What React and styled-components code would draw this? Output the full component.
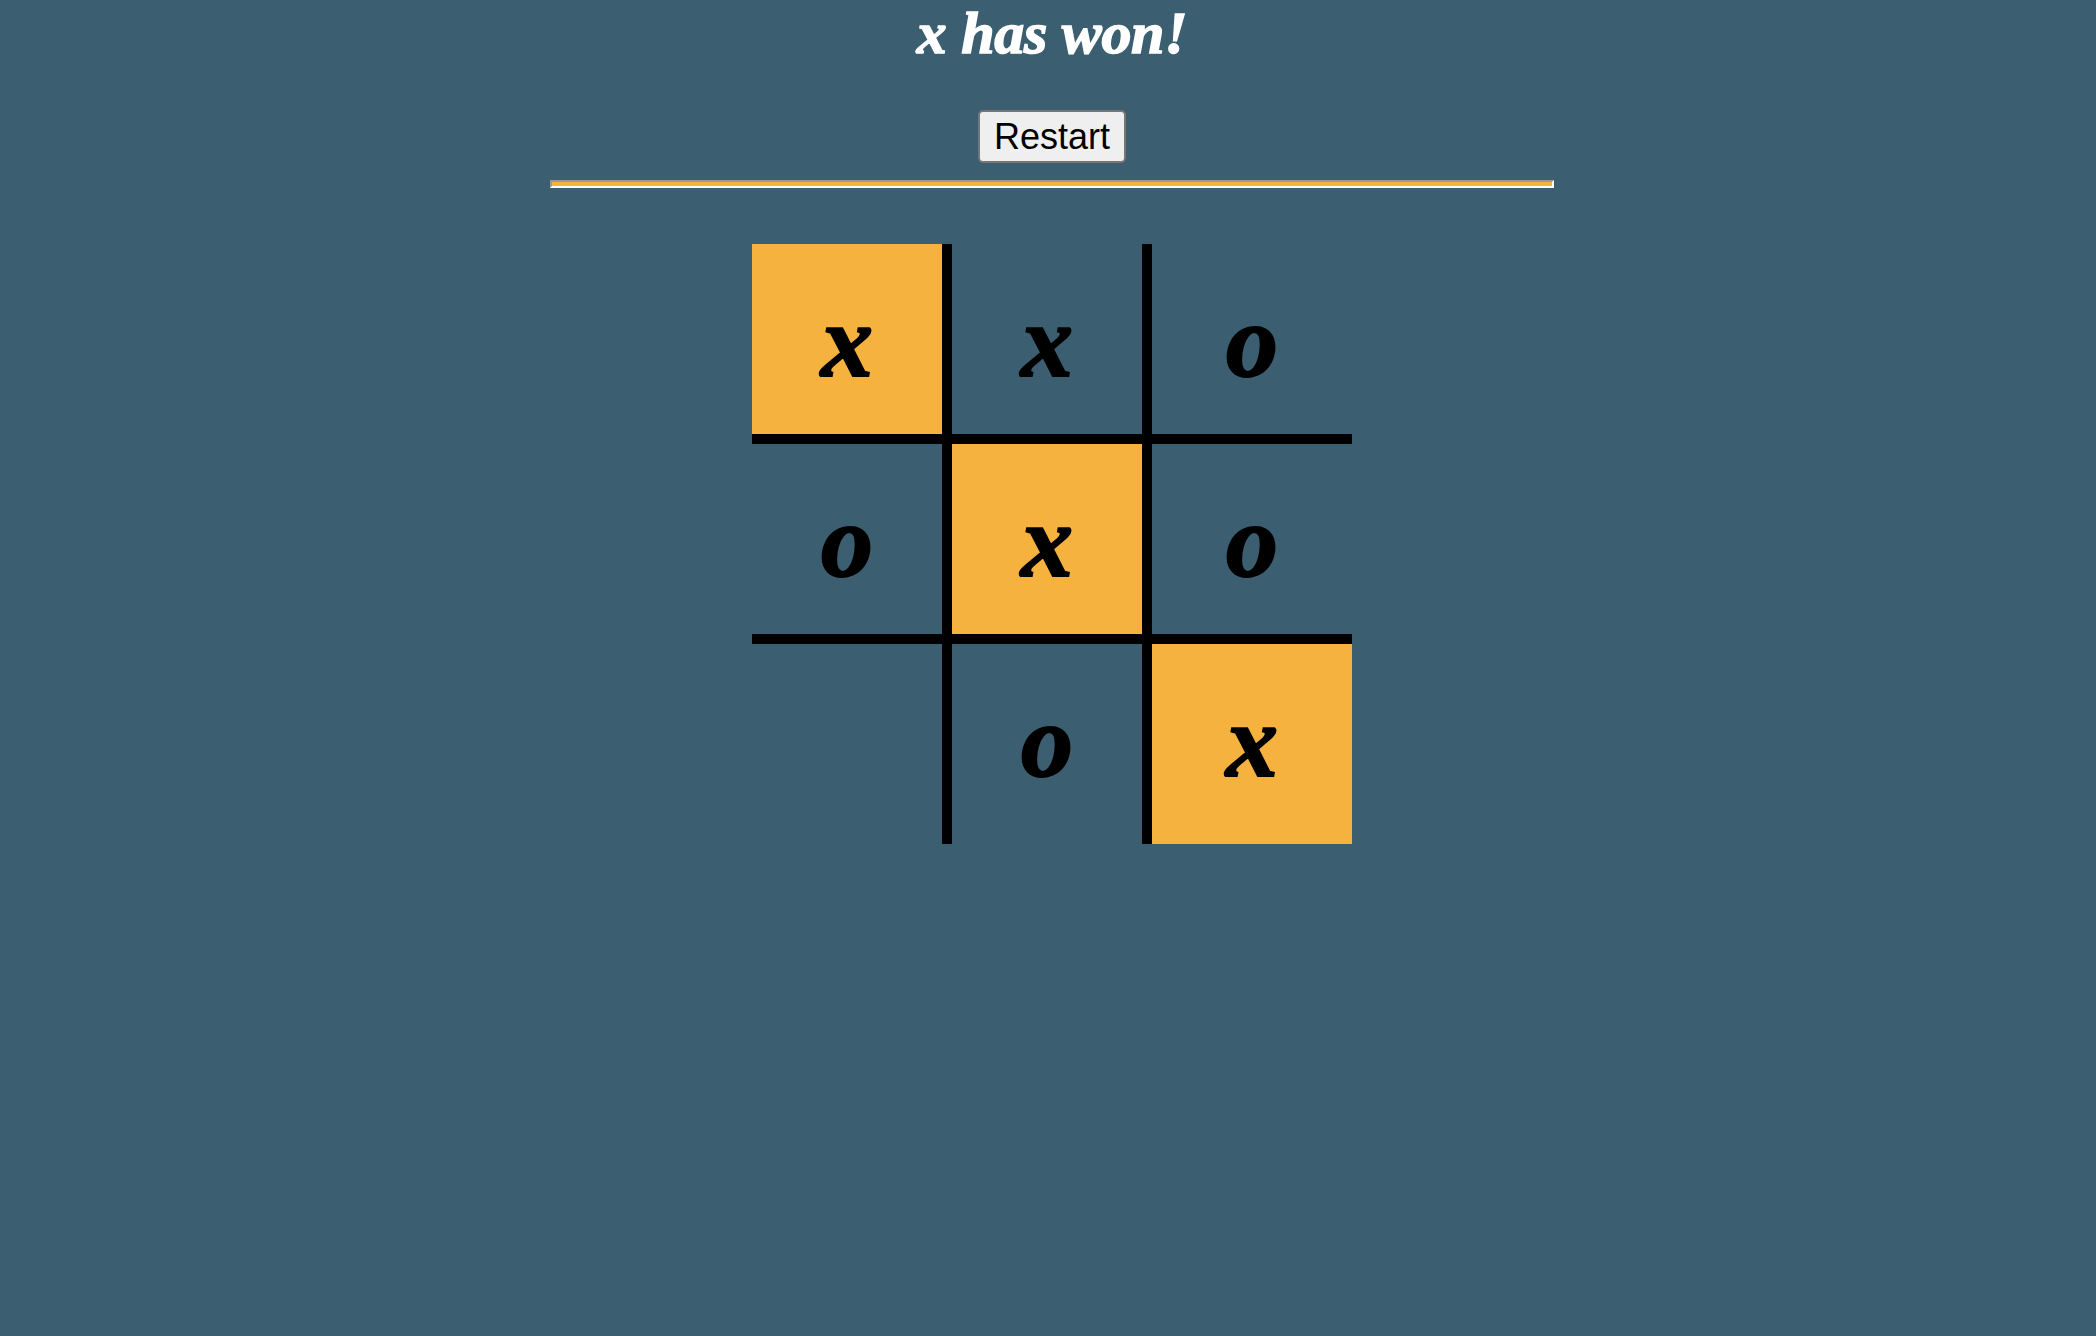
import React from "react";
import styled, { createGlobalStyle } from "styled-components";

const GlobalStyle = createGlobalStyle`
  html, body {
    margin: 0;
    background: #3b5e70;
  }
  body {
    min-height: 1336px;
    padding-left: 8px;
    overflow: hidden;
  }
`

const Page = styled.div`
  display: flex;
  flex-direction: column;
  align-items: center;
`

const Title = styled.h1`
  margin: 0 0 44px;
  font-family: "Liberation Serif", serif;
  font-style: italic;
  font-weight: 700;
  font-size: 60px;
  line-height: 66px;
  letter-spacing: -0.3px;
  color: #fff;
  -webkit-text-stroke: 1.5px #fff;
`

const RestartButton = styled.button`
  box-sizing: border-box;
  width: 148px;
  height: 53px;
  padding: 0;
  font-family: "Liberation Sans", Arial, sans-serif;
  font-size: 36px;
  color: #000;
  background: #efefef;
  border: 2px solid #767676;
  border-radius: 5px;
`

const Rule = styled.hr`
  box-sizing: border-box;
  width: 1004px;
  height: 8px;
  margin: 17px 0 56px;
  background: #f5b23e;
  border-style: solid;
  border-width: 2px;
  border-color: #9a9a9a #fff #fff #9a9a9a;
`

const Board = styled.div`
  display: grid;
  grid-template-columns: repeat(3, 200px);
  grid-template-rows: repeat(3, 200px);
`

const Cell = styled.div`
  box-sizing: border-box;
  text-align: center;
  font-family: "Liberation Serif", serif;
  font-style: italic;
  font-weight: 700;
  font-size: 104px;
  line-height: 193px;
  color: #000;
  -webkit-text-stroke: 2px #000;
  background: ${(p) => (p.$won ? "#f5b23e" : "transparent")};
  border-right: ${(p) => (p.$col < 2 ? "10px solid #000" : "none")};
  border-bottom: ${(p) => (p.$row < 2 ? "10px solid #000" : "none")};
`

const squares = ["x", "x", "o", "o", "x", "o", "", "o", "x"]
const winning = [0, 4, 8]

const App = () => {
  return (
    <Page>
      <GlobalStyle />
      <Title>x has won!</Title>
      <RestartButton>Restart</RestartButton>
      <Rule />
      <Board>
        {squares.map((mark, i) => (
          <Cell key={i} $row={Math.floor(i / 3)} $col={i % 3} $won={winning.includes(i)}>
            {mark}
          </Cell>
        ))}
      </Board>
    </Page>
  )
}

export default App
